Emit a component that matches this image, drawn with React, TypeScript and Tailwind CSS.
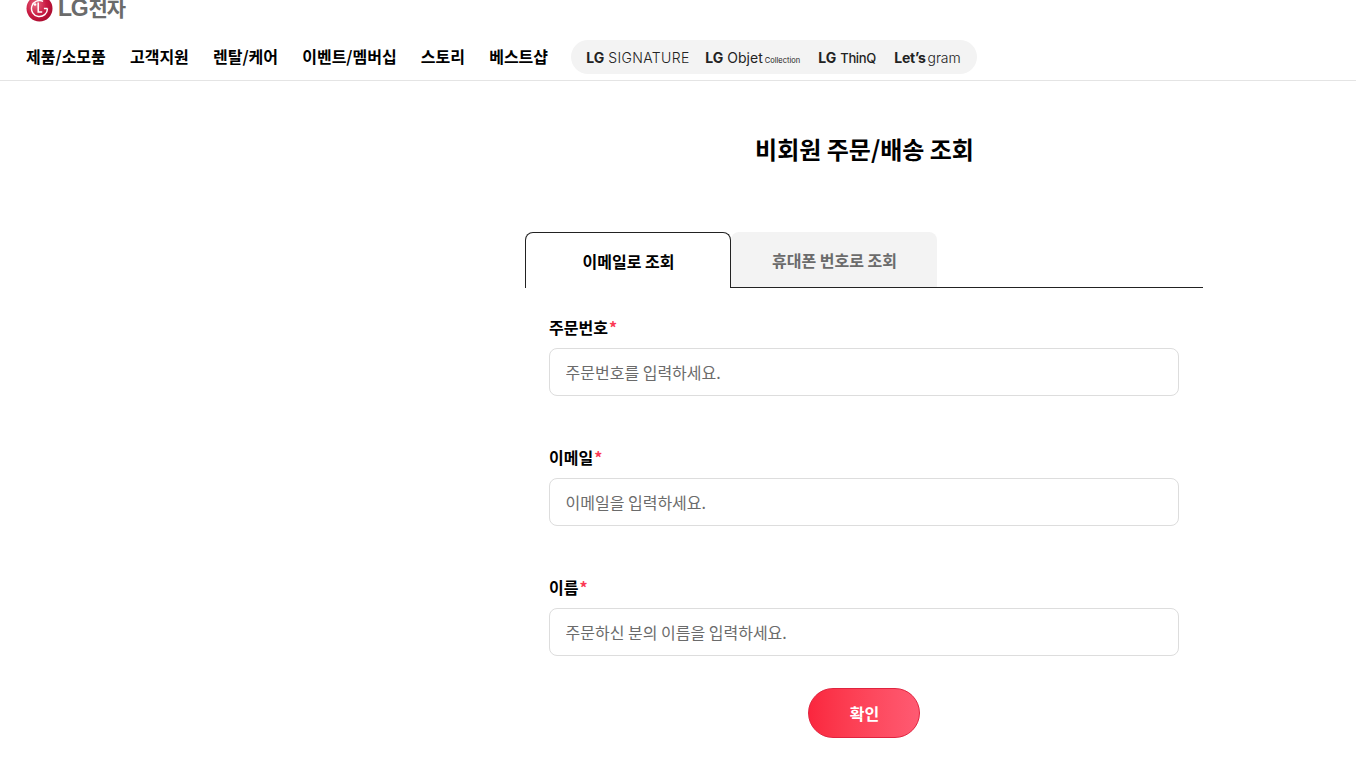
import React from 'react';

const KR = "font-['Noto_Sans_CJK_KR','Noto_Sans',sans-serif]";

const navItems = ['제품/소모품', '고객지원', '렌탈/케어', '이벤트/멤버십', '스토리', '베스트샵'];

const fields = [
  { label: '주문번호', placeholder: '주문번호를 입력하세요.' },
  { label: '이메일', placeholder: '이메일을 입력하세요.' },
  { label: '이름', placeholder: '주문하신 분의 이름을 입력하세요.' },
];

const LgLogo: React.FC = () => (
  <svg width="27" height="27" viewBox="0 0 27 27" className="shrink-0">
    <defs>
      <radialGradient id="lgRed" cx="35%" cy="35%" r="75%">
        <stop offset="0%" stopColor="#e8687f" />
        <stop offset="55%" stopColor="#c91a42" />
        <stop offset="100%" stopColor="#a50a2c" />
      </radialGradient>
    </defs>
    <circle cx="13.5" cy="13.5" r="13" fill="url(#lgRed)" />
    <path d="M12.2 7.5v9.5h4" fill="none" stroke="#fff" strokeWidth="1.5" />
    <circle cx="9" cy="9.5" r="1.3" fill="#fff" />
    <path d="M21.5 13.5h-3.6M21.5 13.5a8 8 0 1 1-4.4-7.1" fill="none" stroke="#fff" strokeWidth="1.4" />
  </svg>
);

const App: React.FC = () => {
  return (
    <div className={`h-[760px] overflow-hidden bg-white text-black ${KR}`}>
      <header className="flow-root h-[81px] border-b border-[#e4e4e4] pl-[26px]">
        <div className="-mt-[5px] flex h-[27px] items-center gap-[5px]">
          <LgLogo />
          <span className="whitespace-nowrap font-bold text-[#6b6b6b]">
            <span className="font-['Liberation_Sans',sans-serif] text-[23px] leading-none tracking-[-1.2px]">LG</span>
            <span className="ml-[1px] text-[21px] leading-none tracking-[-1px]">전자</span>
          </span>
        </div>
        <div className="mt-[18px] flex items-center">
          <nav className="mb-[2px] flex gap-[24.15px] text-[16px] leading-[24px] font-bold">
            {navItems.map(item => (
              <span key={item} className="whitespace-nowrap">{item}</span>
            ))}
          </nav>
          <div className="ml-[23.25px] flex h-[34px] w-[406px] items-center rounded-full bg-[#f3f3f3] pl-[15px] whitespace-nowrap text-[#222]">
            <span className="flex w-[119px] items-baseline font-['Inter',sans-serif] text-[14px]">
              <b className="mr-[4px]">LG</b><span className="font-light tracking-[0.35px]">SIGNATURE</span>
            </span>
            <span className="flex w-[113px] items-baseline font-['Inter',sans-serif] text-[14px]">
              <b className="mr-[4px]">LG</b><span>Objet</span>
              <span className="ml-[2px] text-[7.5px]">Collection</span>
            </span>
            <span className="flex w-[76px] translate-y-[1px] items-baseline font-['Inter',sans-serif] text-[14px]">
              <b className="mr-[4px]">LG</b><span className="text-[13px] font-medium tracking-[-0.4px]">ThinQ</span>
            </span>
            <span className="flex items-baseline font-['Inter',sans-serif] text-[14px]">
              <b className="tracking-[-0.3px]">Let’s</b><span className="ml-[2px] font-light tracking-[-0.1px]">gram</span>
            </span>
          </div>
        </div>
      </header>

      <main className="flex flex-col items-center pl-[371px]">
        <h1 className="mt-[50px] pl-[2px] text-[24px] leading-[36px] font-bold">비회원 주문/배송 조회</h1>

        <div className="mt-[65px] w-[678px]">
          <div className="flex h-[56px] border-b border-[#222]">
            <button className="-mb-px h-[56px] w-[206px] rounded-t-[8px] border border-b-0 border-[#222] bg-white pl-[2px] text-[16px] font-bold">
              이메일로 조회
            </button>
            <button className="h-[55px] w-[206px] rounded-t-[8px] bg-[#f3f3f3] pl-[2px] text-[16px] font-bold text-[#6b6b6b]">
              휴대폰 번호로 조회
            </button>
          </div>

          <form className="flex flex-col gap-[50px] px-[24px] pt-[28px]">
            {fields.map(field => (
              <div key={field.label}>
                <label className="block h-[24px] pl-[0.5px] text-[16px] leading-[22px] font-bold">
                  {field.label}<span className="ml-[1px] text-[#fb3a55]">*</span>
                </label>
                <input
                  placeholder={field.placeholder}
                  className="mt-[8px] h-[48px] w-full rounded-[8px] border border-[#dddddd] px-[16px] text-[16px] outline-none placeholder:text-[#6b6b6b]"
                />
              </div>
            ))}
            <button
              type="button"
              className="mx-auto -mt-[18px] h-[50px] w-[112px] rounded-full border border-[#e0243f] bg-gradient-to-r from-[#fa263e] to-[#ff5a72] pl-[2px] text-[16px] font-bold text-white"
            >
              확인
            </button>
          </form>
        </div>
      </main>
    </div>
  );
};

export default App;
